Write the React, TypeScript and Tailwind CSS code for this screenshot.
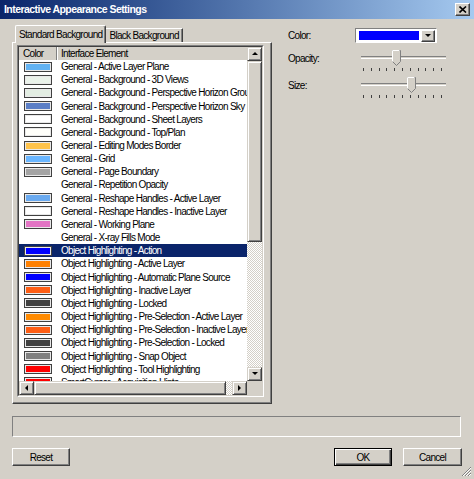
import React from "react";

type Row = { label: string; color?: string };

const rows: Row[] = [
  { label: "General - Active Layer Plane", color: "#62b2f2" },
  { label: "General - Background - 3D Views", color: "#eaf2ea" },
  { label: "General - Background - Perspective Horizon Ground", color: "#e2ede2" },
  { label: "General - Background - Perspective Horizon Sky", color: "#5a7ec6" },
  { label: "General - Background - Sheet Layers", color: "#ffffff" },
  { label: "General - Background - Top/Plan", color: "#fffffa" },
  { label: "General - Editing Modes Border", color: "#ffc34a" },
  { label: "General - Grid", color: "#6ab6ff" },
  { label: "General - Page Boundary", color: "#a4a4a4" },
  { label: "General - Repetition Opacity" },
  { label: "General - Reshape Handles - Active Layer", color: "#6aaaf0" },
  { label: "General - Reshape Handles - Inactive Layer", color: "#ffffff" },
  { label: "General - Working Plane", color: "#e373c4" },
  { label: "General - X-ray Fills Mode" },
  { label: "Object Highlighting - Action", color: "#0000ff" },
  { label: "Object Highlighting - Active Layer", color: "#ff8000" },
  { label: "Object Highlighting - Automatic Plane Source", color: "#0000ff" },
  { label: "Object Highlighting - Inactive Layer", color: "#ff5e14" },
  { label: "Object Highlighting - Locked", color: "#404040" },
  { label: "Object Highlighting - Pre-Selection - Active Layer", color: "#ff8a00" },
  { label: "Object Highlighting - Pre-Selection - Inactive Layer", color: "#ff5e14" },
  { label: "Object Highlighting - Pre-Selection - Locked", color: "#404040" },
  { label: "Object Highlighting - Snap Object", color: "#808080" },
  { label: "Object Highlighting - Tool Highlighting", color: "#ff0000" },
  { label: "SmartCursor - Acquisition Hints", color: "#ff0000" },
];

const SELECTED = 14;

function Arrow({ dir }: { dir: "up" | "down" | "left" | "right" }) {
  const pts = {
    up: "1,5 4,2 7,5",
    down: "1,2 4,5 7,2",
    left: "5,1 2,4 5,7",
    right: "2,1 5,4 2,7",
  }[dir];
  return (
    <svg width="8" height="8" viewBox="0 0 8 8">
      <polygon points={pts} fill="#000" />
    </svg>
  );
}

function ScrollBtn({ dir }: { dir: "up" | "down" | "left" | "right" }) {
  return (
    <div className="w-[15px] h-[14px] shrink-0 flex items-center justify-center bg-[#d4d0c8] border border-t-[#d4d0c8] border-l-[#d4d0c8] border-r-[#404040] border-b-[#404040] shadow-[inset_1px_1px_#ffffff,inset_-1px_-1px_#808080]">
      <Arrow dir={dir} />
    </div>
  );
}

function Slider({ pos }: { pos: number }) {
  const ticks = Array.from({ length: 11 }, (_, i) => i);
  return (
    <div className="relative w-[86px] h-[24px]">
      <div className="absolute left-[1px] right-0 top-[6px] h-[3px] border-t border-t-[#808080] border-b border-b-white" />
      <svg
        className="absolute top-0"
        style={{ left: pos }}
        width="9"
        height="16"
        viewBox="0 0 9 16"
      >
        <polygon points="0.5,0.5 8.5,0.5 8.5,11.5 4.5,15.5 0.5,11.5" fill="#d4d0c8" stroke="#808080" />
        <polyline points="0.5,11.5 0.5,0.5 7.5,0.5" fill="none" stroke="#ffffff" />
      </svg>
      <div className="absolute left-[3px] top-[18px] w-[79px] flex justify-between">
        {ticks.map((t) => (
          <div key={t} className="w-px h-[3px] bg-[#404040]" />
        ))}
      </div>
    </div>
  );
}

export default function App() {
  return (
    <div className="w-[474px] h-[479px] bg-[#d4d0c8] flex flex-col text-[10px] tracking-[-0.7px] text-black font-['Tahoma','Liberation_Sans',sans-serif] overflow-hidden relative">
      {/* title bar */}
      <div className="h-[19px] shrink-0 flex items-center justify-between pl-[4px] pr-[4px] bg-gradient-to-r from-[#0a246a] to-[#a6caf0]">
        <span className="text-white font-bold text-[10.5px] tracking-[-0.55px] leading-none">Interactive Appearance Settings</span>
        <div className="w-[15px] h-[13px] flex items-center justify-center bg-[#d4d0c8] border border-t-white border-l-white border-r-[#404040] border-b-[#404040] shadow-[inset_-1px_-1px_#808080]">
          <svg width="8" height="7" viewBox="0 0 8 7">
            <path d="M0.5 0.5 L7 6.5 M7 0.5 L0.5 6.5" stroke="#000" strokeWidth="1.6" />
          </svg>
        </div>
      </div>

      <div className="flex pl-[12px] pt-[6px]">
        {/* left column */}
        <div className="w-[260px] flex flex-col">
          <div className="h-[17px] flex items-end pl-[3px] relative z-10">
            <div className="h-[18px] px-[3px] flex items-center bg-[#d4d0c8] border-t border-l border-t-white border-l-white border-r border-r-[#404040] shadow-[inset_-1px_0_#808080] rounded-t-[2px] -mb-px">
              Standard Background
            </div>
            <div className="h-[14px] px-[3px] flex items-center bg-[#d4d0c8] border-t border-t-white border-r border-r-[#404040] shadow-[inset_-1px_0_#808080]">
              Black Background
            </div>
          </div>
          <div className="h-[362px] border border-t-white border-l-white border-r-[#404040] border-b-[#404040] shadow-[inset_-1px_-1px_#808080] pl-[4px] pr-[7px] pt-[2px]">
            {/* list box */}
            <div className="h-[352px] border border-t-[#808080] border-l-[#808080] border-r-white border-b-white">
              <div className="h-full border border-t-[#404040] border-l-[#404040] border-r-[#d4d0c8] border-b-[#d4d0c8] flex flex-col bg-white">
                <div className="flex flex-1 min-h-0">
                  <div className="flex-1 min-w-0 overflow-hidden flex flex-col">
                    {/* header */}
                    <div className="h-[13px] shrink-0 flex bg-[#d4d0c8] leading-[13px]">
                      <div className="w-[38px] pl-[4px] border-r border-r-[#808080] shadow-[1px_0_#ffffff]">Color</div>
                      <div className="pl-[4px] whitespace-nowrap">Interface Element</div>
                    </div>
                    {rows.map((r, i) => (
                      <div
                        key={r.label}
                        className={`h-[13.17px] shrink-0 flex items-center whitespace-nowrap ${
                          i === SELECTED ? "bg-[#0a246a] text-white" : ""
                        }`}
                      >
                        <div className="w-[42px] pl-[5px] shrink-0 flex items-center">
                          {r.color && (
                            <div className="w-[28px] h-[10px] border border-[#404040] shadow-[inset_0_0_0_1px_#e8e8e8]" style={{ background: r.color }} />
                          )}
                        </div>
                        <span className="leading-[13px]">{r.label}</span>
                      </div>
                    ))}
                  </div>
                  {/* vertical scrollbar */}
                  <div className="w-[15px] shrink-0 flex flex-col bg-[repeating-conic-gradient(#ffffff_0_25%,#d4d0c8_0_50%)] bg-[length:2px_2px]">
                    <ScrollBtn dir="up" />
                    <div className="h-[181px] shrink-0 bg-[#d4d0c8] border border-t-[#d4d0c8] border-l-[#d4d0c8] border-r-[#404040] border-b-[#404040] shadow-[inset_1px_1px_#ffffff,inset_-1px_-1px_#808080]" />
                    <div className="flex-1" />
                    <ScrollBtn dir="down" />
                  </div>
                </div>
                {/* horizontal scrollbar */}
                <div className="h-[14px] shrink-0 flex bg-[repeating-conic-gradient(#ffffff_0_25%,#d4d0c8_0_50%)] bg-[length:2px_2px]">
                  <ScrollBtn dir="left" />
                  <div className="w-[192px] shrink-0 bg-[#d4d0c8] border border-t-[#d4d0c8] border-l-[#d4d0c8] border-r-[#404040] border-b-[#404040] shadow-[inset_1px_1px_#ffffff,inset_-1px_-1px_#808080]" />
                  <div className="flex-1" />
                  <ScrollBtn dir="right" />
                  <div className="w-[15px] shrink-0 bg-[#d4d0c8]" />
                </div>
              </div>
            </div>
          </div>
        </div>

        {/* right column */}
        <div className="ml-[16px] pt-[3px] flex flex-col">
          <div className="flex items-center h-[15px]">
            <span className="w-[67px]">Color:</span>
            <div className="w-[82px] h-[15px] bg-white border border-t-[#808080] border-l-[#808080] border-r-white border-b-white flex items-center pl-[3px] pr-[1px] gap-[2px]">
              <div className="flex-1 h-[9px] bg-[#0000ff]" />
              <div className="w-[14px] h-[12px] flex items-center justify-center bg-[#d4d0c8] border border-t-white border-l-white border-r-[#404040] border-b-[#404040] shadow-[inset_-1px_-1px_#808080]">
                <Arrow dir="down" />
              </div>
            </div>
          </div>
          <div className="flex mt-[7px]">
            <span className="w-[72px] pt-[1px]">Opacity:</span>
            <Slider pos={32} />
          </div>
          <div className="flex mt-[3px]">
            <span className="w-[72px] pt-[1px]">Size:</span>
            <Slider pos={47} />
          </div>
        </div>
      </div>

      {/* status box */}
      <div className="ml-[12px] mt-[12px] w-[449px] h-[21px] border border-t-[#808080] border-l-[#808080] border-r-white border-b-white" />

      {/* buttons */}
      <div className="flex ml-[12px] mt-[11px]">
        <button className="w-[58px] h-[18px] bg-[#d4d0c8] border border-t-white border-l-white border-r-[#404040] border-b-[#404040] shadow-[inset_-1px_-1px_#808080] flex items-center justify-center">
          Reset
        </button>
        <button className="ml-[264px] w-[58px] h-[18px] bg-[#d4d0c8] border border-black shadow-[inset_1px_1px_#ffffff,inset_-1px_-1px_#404040,inset_-2px_-2px_#808080] flex items-center justify-center">
          OK
        </button>
        <button className="ml-[11px] w-[59px] h-[18px] bg-[#d4d0c8] border border-t-white border-l-white border-r-[#404040] border-b-[#404040] shadow-[inset_-1px_-1px_#808080] flex items-center justify-center">
          Cancel
        </button>
      </div>

      {/* resize grip */}
      <svg className="absolute right-[2px] bottom-[2px]" width="12" height="12" viewBox="0 0 12 12">
        <path d="M11 2 L2 11 M11 5 L5 11 M11 8 L8 11" stroke="#808080" strokeWidth="1" />
        <path d="M11 3 L3 11 M11 6 L6 11 M11 9 L9 11" stroke="#ffffff" strokeWidth="1" />
      </svg>
    </div>
  );
}
